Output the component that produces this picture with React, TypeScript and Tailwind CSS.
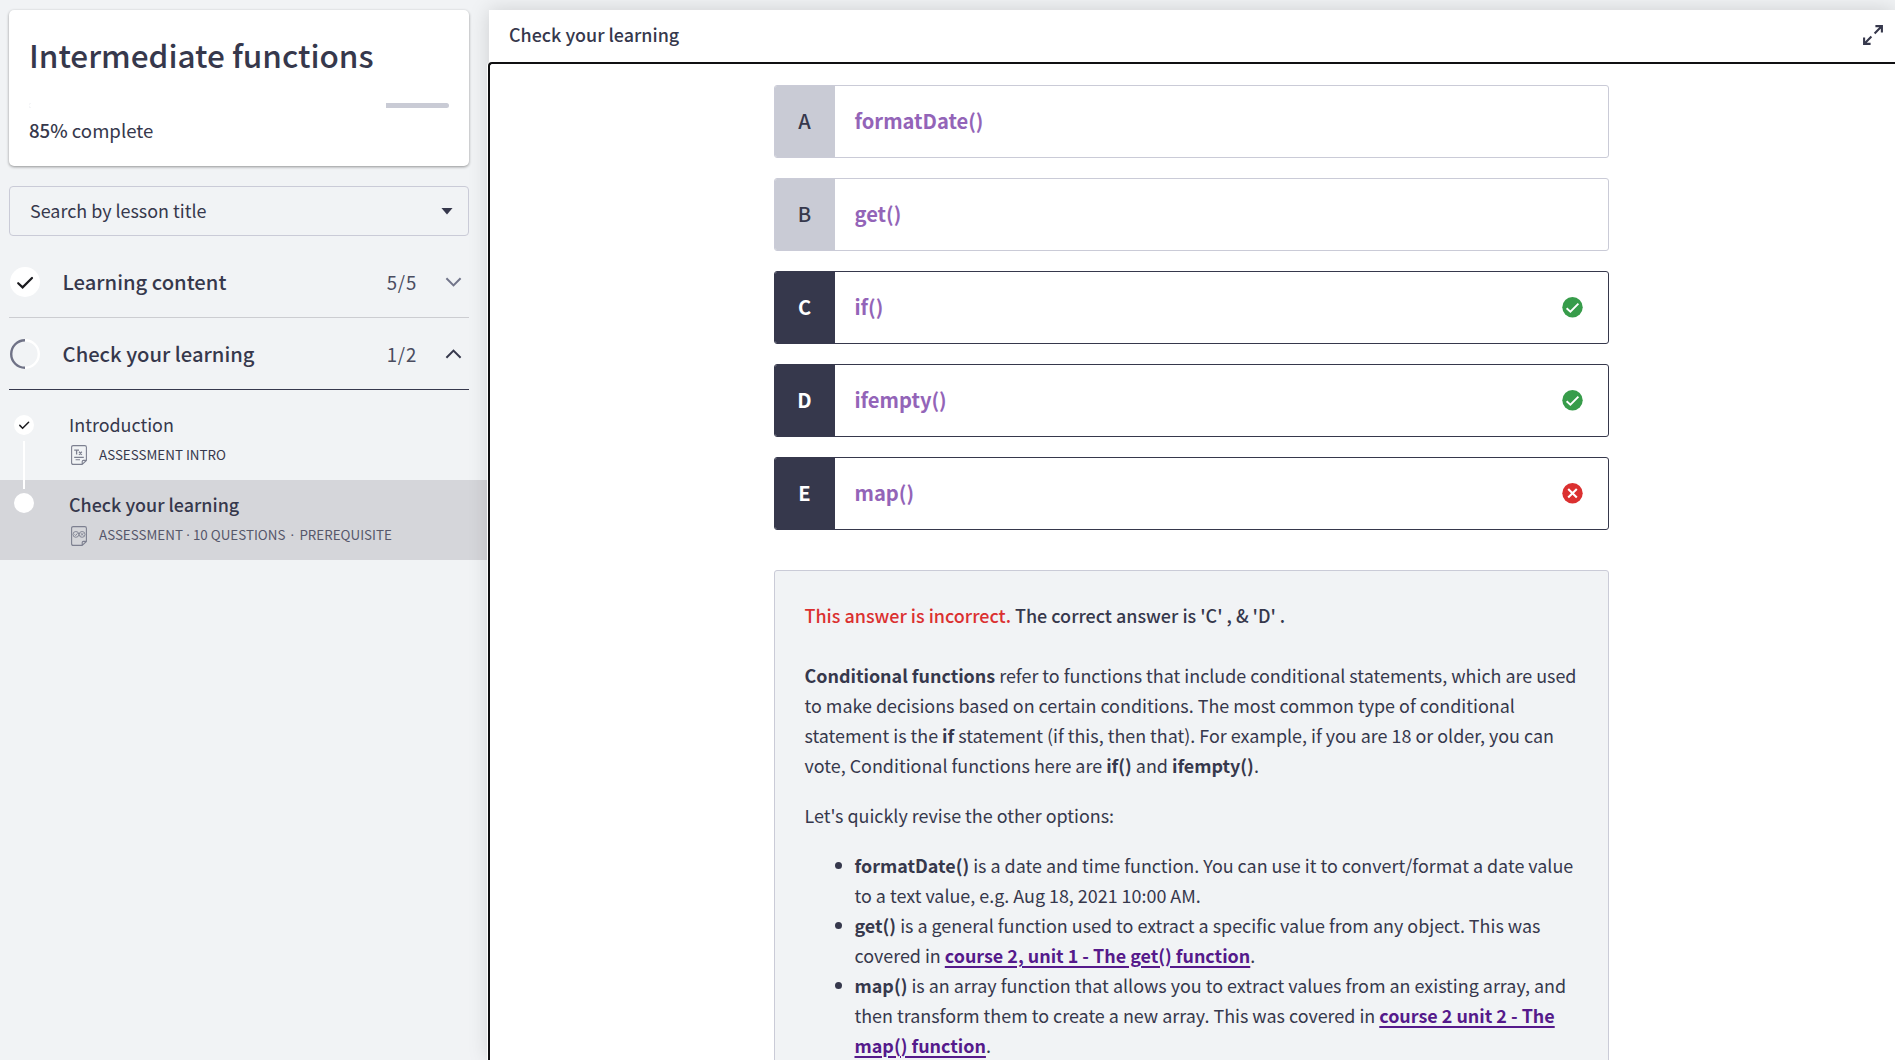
import type { ReactNode } from "react";

type Mark = "correct" | "wrong" | null;

const options: { letter: string; label: string; chosen: boolean; mark: Mark }[] = [
  { letter: "A", label: "formatDate()", chosen: false, mark: null },
  { letter: "B", label: "get()", chosen: false, mark: null },
  { letter: "C", label: "if()", chosen: true, mark: "correct" },
  { letter: "D", label: "ifempty()", chosen: true, mark: "correct" },
  { letter: "E", label: "map()", chosen: true, mark: "wrong" },
];

function MarkIcon({ mark }: { mark: Mark }) {
  if (!mark) return null;
  return (
    <svg className="h-[21px] w-[21px] shrink-0" viewBox="0 0 21 21" fill="none">
      <circle cx="10.5" cy="10.2" r="10.2" fill={mark === "correct" ? "#379c4a" : "#db3030"} />
      {mark === "correct" ? (
        <path d="M4.6 11.2 8.4 14.6 16.4 6.6" stroke="#fff" strokeWidth="1.9" />
      ) : (
        <path d="M6.2 6 14.8 14.6M14.8 6 6.2 14.6" stroke="#fff" strokeWidth="2.1" />
      )}
    </svg>
  );
}

function Option({ letter, label, chosen, mark }: (typeof options)[number]) {
  return (
    <div
      className={`flex h-[73px] items-stretch overflow-hidden rounded-[3px] border bg-white ${
        chosen ? "border-[#36384c]" : "border-[#cacbd7]"
      }`}
    >
      <div
        className={`flex w-[60px] shrink-0 items-center justify-center pr-px pb-[2px] text-[20.1px] leading-[30px] ${
          chosen ? "bg-[#36384c] font-bold text-white" : "bg-[#c9cbd5] font-medium"
        }`}
      >
        {letter}
      </div>
      <div className="flex grow items-center justify-between pr-[25px] pl-[19.5px]">
        <span className="pb-[2px] text-[20.15px] leading-[30px] font-bold text-[#9364b8]">{label}</span>
        <MarkIcon mark={mark} />
      </div>
    </div>
  );
}

function Bullet({ children }: { children: ReactNode }) {
  return (
    <li className="flex">
      <span className="mt-[12px] mr-[13px] h-[7px] w-[7px] shrink-0 rounded-full bg-[#36384c]" />
      <div>{children}</div>
    </li>
  );
}

function CourseLink({ children }: { children: ReactNode }) {
  return (
    <a className="font-bold text-[#551a8b] underline decoration-2 underline-offset-[3px]">{children}</a>
  );
}

function DocIcon({ children }: { children: ReactNode }) {
  return (
    <svg className="h-5 w-4 shrink-0" viewBox="0 0 16 20" fill="none" stroke="#7d8090" strokeWidth="1.1">
      <path d="M10.8 19.4H2.2Q.6 19.4.6 17.8V2.2Q.6.6 2.2.6H13.8Q15.4.6 15.4 2.2V15.4L11.2 19.4V16.6Q11.2 15.4 12.4 15.4H15.4" />
      {children}
    </svg>
  );
}

function Section(props: { icon: ReactNode; title: string; count: string; open: boolean }) {
  return (
    <div
      className={`mr-5 ml-[9px] flex h-[72px] items-center border-b ${
        props.open ? "border-[#36384c]" : "border-[#cccdd1]"
      }`}
    >
      {props.icon}
      <span className="ml-[22.6px] grow text-[20.2px] leading-[30px] font-medium">{props.title}</span>
      <span className="mr-[28px] text-[18.6px] leading-[30px] tracking-[0.8px] text-[#4a4c5f]">{props.count}</span>
      <svg className="mr-[7px] h-[10px] w-[17px]" viewBox="0 0 17 10" fill="none" strokeWidth="2">
        {props.open ? (
          <path d="M1.4 8.8 8.5 1.6 15.6 8.8" stroke="#36384c" />
        ) : (
          <path d="M1.4 1.2 8.5 8.4 15.6 1.2" stroke="#72758a" />
        )}
      </svg>
    </div>
  );
}

function Sidebar() {
  return (
    <aside className="w-[489px] shrink-0 pt-[10px]">
      <div className="mr-5 ml-[9px] h-[156px] rounded-[5px] bg-white px-5 pt-6 shadow-[0_1px_3px_rgba(0,0,0,0.4)]">
        <h1 className="text-[31.5px] leading-[40px] font-medium">Intermediate functions</h1>
        <div className="mt-[29px] h-[5px] overflow-hidden rounded-full bg-[#c9cbd5]">
          <div className="h-full w-[85%] bg-white" />
        </div>
        <p className="mt-[7px] text-[18.6px] leading-[30px]">
          <span className="font-medium">85%</span> complete
        </p>
      </div>

      <div className="mt-5 mr-5 ml-[9px] flex h-[50px] items-center justify-between rounded-[4px] border border-[#cacbd7] pr-[15px] pl-5">
        <span className="pb-[3px] leading-[30px]">Search by lesson title</span>
        <span className="h-[7px] w-3 bg-[#36384c] [clip-path:polygon(0_0,100%_0,50%_100%)]" />
      </div>

      <div className="mt-[10px]">
        <Section
          title="Learning content"
          count="5/5"
          open={false}
          icon={
            <svg className="ml-px h-[30px] w-[30px]" viewBox="0 0 30 30" fill="none">
              <circle cx="15" cy="15" r="15" fill="#fff" />
              <path d="M8.2 16.2 12.6 20.4 22 11" stroke="#1b1b1f" strokeWidth="2.2" strokeLinecap="round" />
            </svg>
          }
        />
        <Section
          title="Check your learning"
          count="1/2"
          open
          icon={
            <svg className="ml-px h-[30px] w-[30px]" viewBox="0 0 30 30" fill="none" strokeWidth="2.4">
              <path d="M15 1.2A13.8 13.8 0 0 1 15 28.8" stroke="#fff" />
              <path d="M15 1.2A13.8 13.8 0 0 0 15 28.8" stroke="#6f7286" />
            </svg>
          }
        />
      </div>

      <div className="flex h-[90px] pl-[14px]">
        <div className="z-10 mt-[25px] flex w-5 shrink-0 flex-col items-center">
          <svg className="h-5 w-5 shrink-0" viewBox="0 0 20 20" fill="none">
            <circle cx="10" cy="10" r="10" fill="#fff" />
            <path d="M5.8 10.4 8.6 13.2 14.6 7.2" stroke="#1b1b1f" strokeWidth="1.5" strokeLinecap="round" />
          </svg>
          <span className="mt-[6px] h-[48px] w-[2px] shrink-0 bg-white" />
        </div>
        <div className="ml-[35px] pt-[19px]">
          <p className="leading-[30px]">Introduction</p>
          <div className="mt-[6px] flex items-center pl-[2px]">
            <DocIcon>
              <path d="M3.2 5.2H8M5.6 5.2V9.6M8 6.8 10.8 9.8M10.8 6.8 8 9.8" strokeWidth="1.3" />
              <path d="M3.2 12.4H12.8M4.6 14.8H9" />
            </DocIcon>
            <span className="ml-3 pb-[2px] text-[13.38px] leading-[18px]">ASSESSMENT INTRO</span>
          </div>
        </div>
      </div>

      <div className="flex h-20 bg-[#d5d6da] pl-[14px]">
        <span className="mt-[13px] h-5 w-5 shrink-0 rounded-full bg-white" />
        <div className="ml-[35px] pt-[9px]">
          <p className="leading-[30px] font-medium">Check your learning</p>
          <div className="mt-[6px] flex items-center pl-[2px]">
            <DocIcon>
              <circle cx="4.9" cy="8.4" r="2.9" strokeWidth=".9" />
              <circle cx="11.1" cy="8.4" r="2.9" strokeWidth=".9" />
              <path d="M3.5 8.4 4.6 9.5 6.5 7.3M9.9 7.2 12.3 9.6M12.3 7.2 9.9 9.6" strokeWidth=".9" />
            </DocIcon>
            <div className="ml-3 flex pb-[2px] text-[13.38px] leading-[18px] text-[#55576a]">
              <span>ASSESSMENT</span>
              <span className="w-[10px] pt-px text-center font-['Noto_Sans']">·</span>
              <span>10 QUESTIONS</span>
              <span className="w-[14px] pt-px text-center font-['Noto_Sans']">·</span>
              <span>PREREQUISITE</span>
            </div>
          </div>
        </div>
      </div>
    </aside>
  );
}

export default function App() {
  return (
    <div className="flex h-[1060px] w-[1895px] overflow-hidden bg-[#f1f3f5] font-['Noto_Sans_CJK_SC',sans-serif] text-[17.91px] leading-[30px] text-[#36384c]">
      <Sidebar />
      <main className="relative z-20 mt-[10px] flex grow flex-col bg-white shadow-[0_0_20px_rgba(0,0,0,0.15)]">
        <header className="flex h-[52px] shrink-0 items-center justify-between pr-3 pb-[4px] pl-5">
          <h2 className="font-medium">Check your learning</h2>
          <svg className="mt-[2px] h-5 w-5" viewBox="0 0 20 20" fill="none" stroke="#36384c" strokeWidth="2.1">
            <path d="M12.4 1.1H18.9V7.6M18.4 1.6 11.6 8.4" />
            <path d="M7.6 18.9H1.1V12.4M1.6 18.4 8.4 11.6" />
          </svg>
        </header>
        <section className="-ml-px flex h-[1000px] shrink-0 justify-center rounded-tl-[4px] border-t-2 border-l-2 border-[#101012] bg-white pt-[21px] shadow-[-1px_0_0_#fff]">
          <div className="mr-[2px] w-[835px]">
            <div className="flex flex-col gap-5">
              {options.map((o) => (
                <Option key={o.letter} {...o} />
              ))}
            </div>

            <div className="mt-10 h-[560px] rounded-t-[3px] border border-[#cacbd7] bg-[#f1f3f5] px-[29.5px] pt-[29px] whitespace-nowrap">
              <p className="text-[17.95px] font-medium">
                <span className="text-[#db3030]">This answer is incorrect.</span> The correct answer is 'C' , &amp;
                'D' .
              </p>
              <p className="mt-[30px]">
                <b className="font-bold">Conditional functions</b> refer to functions that include conditional
                statements, which are used
                <br />
                to make decisions based on certain conditions. The most common type of conditional
                <br />
                statement is the <b className="font-bold">if</b> statement (if this, then that). For example, if you
                are 18 or older, you can
                <br />
                vote, Conditional functions here are <b className="font-bold">if()</b> and{" "}
                <b className="font-bold">ifempty()</b>.
              </p>
              <p className="mt-5">Let's quickly revise the other options:</p>
              <ul className="mt-5 pl-[30px]">
                <Bullet>
                  <b className="font-bold">formatDate()</b> is a date and time function. You can use it to
                  convert/format a date value
                  <br />
                  to a text value, e.g. Aug 18, 2021 10:00 AM.
                </Bullet>
                <Bullet>
                  <b className="font-bold">get()</b> is a general function used to extract a specific value from any
                  object. This was
                  <br />
                  covered in <CourseLink>course 2, unit 1 - The get() function</CourseLink>.
                </Bullet>
                <Bullet>
                  <b className="font-bold">map()</b> is an array function that allows you to extract values from an
                  existing array, and
                  <br />
                  then transform them to create a new array. This was covered in{" "}
                  <CourseLink>
                    course 2 unit 2 - The
                    <br />
                    map() function
                  </CourseLink>
                  .
                </Bullet>
              </ul>
            </div>
          </div>
        </section>
      </main>
    </div>
  );
}
